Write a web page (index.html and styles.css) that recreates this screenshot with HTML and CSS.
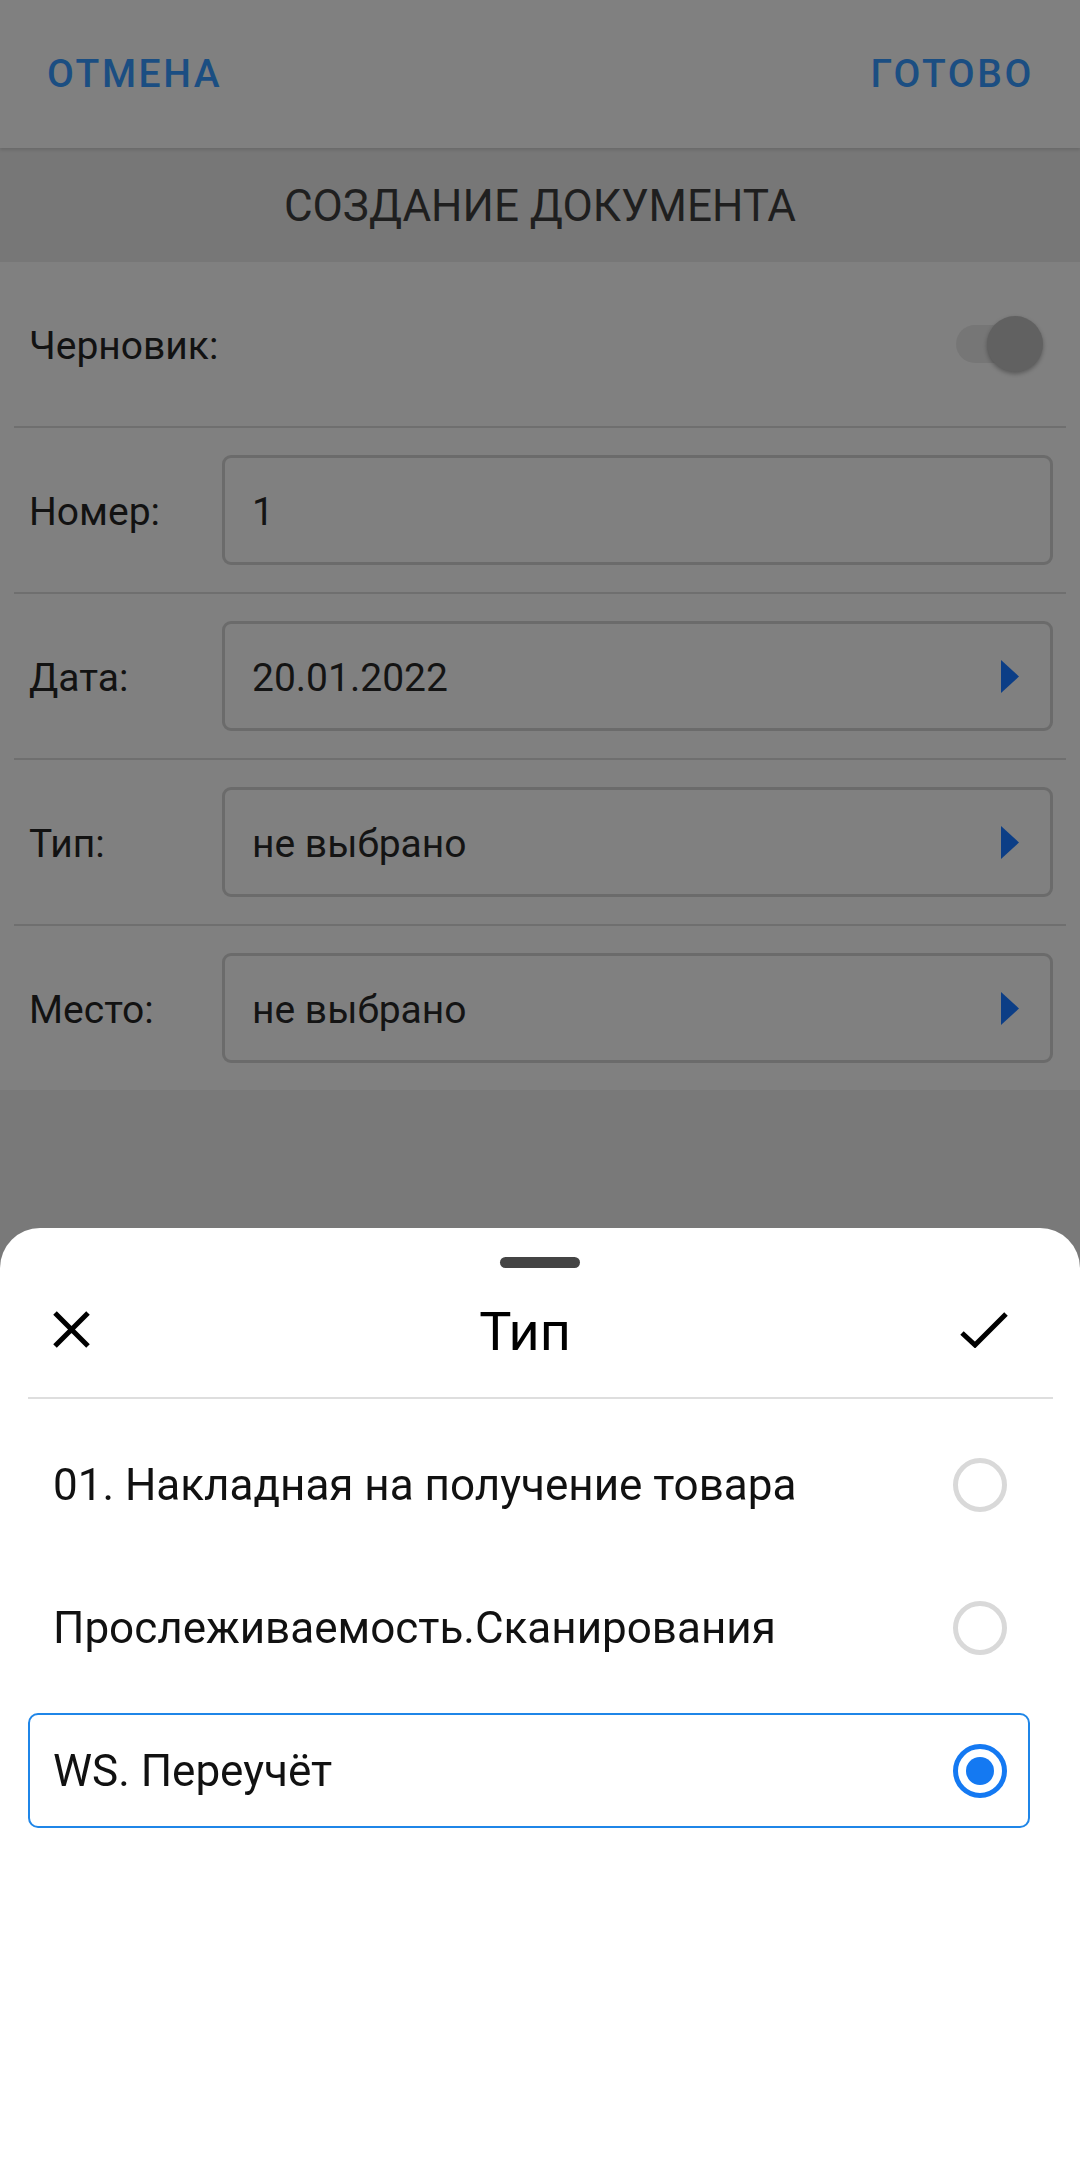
FILE: index.html
```html
<!DOCTYPE html>
<html lang="ru">
<head>
<meta charset="utf-8">
<title>Создание документа</title>
<link rel="stylesheet" href="styles.css">
</head>
<body>
<div class="screen">
  <header class="topbar">
    <span class="topbar-btn">ОТМЕНА</span>
    <span class="topbar-btn">ГОТОВО</span>
  </header>
  <div class="titlebar">СОЗДАНИЕ ДОКУМЕНТА</div>
  <section class="form">
    <div class="row">
      <span class="label">Черновик:</span>
      <div class="switch">
        <span class="switch-track"></span>
        <span class="switch-thumb"></span>
      </div>
    </div>
    <div class="row">
      <span class="label">Номер:</span>
      <div class="field"><span class="value">1</span></div>
    </div>
    <div class="row">
      <span class="label">Дата:</span>
      <div class="field"><span class="value">20.01.2022</span>
        <svg class="arrow" width="18" height="33" viewBox="0 0 18 33"><polygon points="0,0 18,16.5 0,33" fill="#0c3e86"/></svg>
      </div>
    </div>
    <div class="row">
      <span class="label">Тип:</span>
      <div class="field"><span class="value">не выбрано</span>
        <svg class="arrow" width="18" height="33" viewBox="0 0 18 33"><polygon points="0,0 18,16.5 0,33" fill="#0c3e86"/></svg>
      </div>
    </div>
    <div class="row">
      <span class="label">Место:</span>
      <div class="field"><span class="value">не выбрано</span>
        <svg class="arrow" width="18" height="33" viewBox="0 0 18 33"><polygon points="0,0 18,16.5 0,33" fill="#0c3e86"/></svg>
      </div>
    </div>
  </section>
  <div class="rest"></div>
</div>

<div class="sheet">
  <div class="handle"></div>
  <div class="sheet-header">
    <svg class="icon-close" width="37" height="37" viewBox="0 0 37 37"><path d="M2 2 L35 35 M35 2 L2 35" stroke="#000" stroke-width="5" fill="none"/></svg>
    <span class="sheet-title">Тип</span>
    <svg class="icon-check" width="48" height="36" viewBox="0 0 48 36"><path d="M2 21 L15 33 L46 2" stroke="#000" stroke-width="5" fill="none"/></svg>
  </div>
  <div class="sheet-divider"></div>
  <ul class="options">
    <li class="option"><span class="option-text">01. Накладная на получение товара</span><span class="radio"></span></li>
    <li class="option"><span class="option-text">Прослеживаемость.Сканирования</span><span class="radio"></span></li>
    <li class="option selected"><span class="option-text">WS. Переучёт</span><span class="radio"></span></li>
  </ul>
</div>
</body>
</html>
```

FILE: styles.css
```css
* { box-sizing: border-box; }
html, body { margin: 0; padding: 0; }
body {
  width: 1080px;
  height: 2158px;
  overflow: hidden;
  font-family: Roboto, "Noto Sans", "Liberation Sans", sans-serif;
  background: #797979;
}
.screen {
  display: flex;
  flex-direction: column;
  height: 2158px;
}
.topbar {
  height: 148px;
  background: #808080;
  display: flex;
  align-items: center;
  justify-content: space-between;
  padding: 0 46px 0 47px;
  box-shadow: 0 2px 3px rgba(0,0,0,0.12);
  position: relative;
  z-index: 1;
}
.topbar-btn {
  font-size: 39px;
  font-weight: 500;
  letter-spacing: 2.6px;
  color: #1b4e82;
  line-height: 1;
}
.titlebar {
  height: 114px;
  background: #777777;
  display: flex;
  align-items: center;
  justify-content: center;
  font-size: 44px;
  color: #1f1f1f;
  padding-top: 2px;
}
.form {
  background: #808080;
  padding: 0 14px;
}
.row {
  height: 166px;
  border-bottom: 2px solid #6f6f6f;
  display: flex;
  align-items: center;
  padding: 0 13px 0 15px;
}
.row:last-child { border-bottom: none; height: 164px; }
.label {
  width: 193px;
  flex: none;
  font-size: 39px;
  color: #121212;
  padding-top: 4px;
}
.row:first-child { justify-content: space-between; padding-right: 23px; }
.switch {
  position: relative;
  width: 87px;
  height: 56px;
}
.switch-track {
  position: absolute;
  left: 0;
  top: 9px;
  width: 76px;
  height: 38px;
  border-radius: 19px;
  background: #767676;
}
.switch-thumb {
  position: absolute;
  right: 0;
  top: 0;
  width: 56px;
  height: 56px;
  border-radius: 50%;
  background: #616161;
  box-shadow: 0 2px 4px rgba(0,0,0,0.3);
}
.field {
  flex: 1;
  height: 110px;
  border: 3px solid #6b6b6b;
  border-radius: 9px;
  display: flex;
  align-items: center;
  justify-content: space-between;
  padding: 0 31px 0 27px;
}
.value {
  font-size: 39px;
  color: #141414;
  padding-top: 4px;
}
.arrow { flex: none; }
.rest { flex: 1; background: #797979; }

.sheet {
  position: fixed;
  left: 0;
  right: 0;
  top: 1228px;
  bottom: 0;
  background: #ffffff;
  border-radius: 40px 40px 0 0;
  display: flex;
  flex-direction: column;
}
.handle {
  align-self: center;
  width: 80px;
  height: 11px;
  border-radius: 6px;
  background: #444444;
  margin-top: 29px;
}
.sheet-header {
  height: 129px;
  display: flex;
  align-items: center;
  justify-content: space-between;
  padding: 0 72px 7px 53px;
}
.sheet-title {
  font-size: 54px;
  color: #000;
  line-height: 1;
  padding-top: 6px;
}
.icon-check { margin-top: 2px; }
.sheet-divider {
  height: 2px;
  background: #dedede;
  margin: 0 27px 0 28px;
}
.options {
  list-style: none;
  margin: 0;
  padding: 28px 0 0 0;
  display: flex;
  flex-direction: column;
  gap: 28px;
}
.option {
  height: 115px;
  margin: 0 50px 0 28px;
  border: 2px solid transparent;
  border-radius: 10px;
  display: flex;
  align-items: center;
  justify-content: space-between;
  padding: 0 21px 0 23px;
}
.option-text {
  font-size: 44px;
  color: #111;
}
.radio {
  width: 54px;
  height: 54px;
  border-radius: 50%;
  border: 5px solid #d9d9d9;
  flex: none;
  display: flex;
  align-items: center;
  justify-content: center;
}
.option.selected {
  border-color: #1f86e8;
}
.option.selected .radio {
  border-color: #1479f2;
}
.option.selected .radio::after {
  content: "";
  width: 28px;
  height: 28px;
  border-radius: 50%;
  background: #1479f2;
}
```
